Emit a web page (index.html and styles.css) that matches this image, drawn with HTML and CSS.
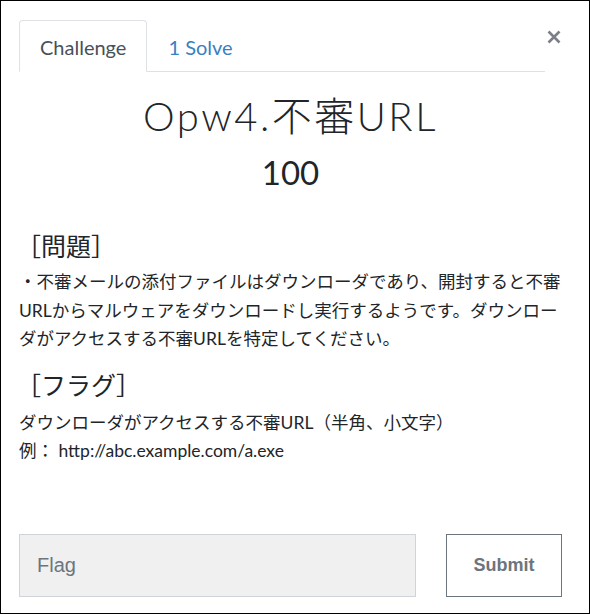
FILE: index.html
```html
<!DOCTYPE html>
<html lang="ja">
<head>
<meta charset="utf-8">
<link rel="stylesheet" href="styles.css">
</head>
<body>
<div class="frame">
  <div class="modal">
    <button class="close" aria-label="Close">
      <svg width="14" height="14" viewBox="0 0 14 14"><path d="M1.5 1.5L12.5 12.5M12.5 1.5L1.5 12.5" stroke="#7b8088" stroke-width="2.6" stroke-linecap="butt"/></svg>
    </button>
    <ul class="tabs">
      <li class="tab active">Challenge</li>
      <li class="tab link">1 Solve</li>
    </ul>
    <div class="content">
      <h1 class="title">Opw4.不審URL</h1>
      <h3 class="value">100</h3>
      <div class="desc">
        <h4 class="sec">［問題］</h4>
        <p class="text">・不審メールの添付ファイルはダウンローダであり、開封すると不審URLからマルウェアをダウンロードし実行するようです。ダウンローダがアクセスする不審URLを特定してください。</p>
        <h4 class="sec sec2">［フラグ］</h4>
        <p class="text">ダウンローダがアクセスする不審URL（半角、小文字）<br>例： http://abc.example.com/a.exe</p>
      </div>
    </div>
    <div class="spacer"></div>
    <form class="submit-row">
      <input class="flag" type="text" placeholder="Flag">
      <button class="btn" type="button">Submit</button>
    </form>
  </div>
</div>
</body>
</html>
```

FILE: styles.css
```css
html, body {
  margin: 0;
  padding: 0;
  background: #fff;
}
.frame {
  box-sizing: border-box;
  width: 590px;
  height: 614px;
  border: 1px solid #000;
}
.modal {
  position: relative;
  box-sizing: border-box;
  height: 100%;
  display: flex;
  flex-direction: column;
  padding: 19px 27px 16px 18px;
  font-family: Lato, "Noto Sans CJK JP", sans-serif;
  color: #212529;
}
.close {
  position: absolute;
  top: 29px;
  right: 28px;
  width: 14px;
  height: 14px;
  padding: 0;
  border: 0;
  background: none;
  display: flex;
}
.tabs {
  list-style: none;
  margin: 0 17px 0 0;
  padding: 0;
  display: flex;
  border-bottom: 1px solid #dee2e6;
}
.tab {
  box-sizing: border-box;
  height: 52px;
  padding: 14px 20px 0 20px;
  font-size: 20px;
  line-height: 24px;
  margin-bottom: -1px;
  border: 1px solid transparent;
  border-top-left-radius: 4px;
  border-top-right-radius: 4px;
}
.tab.active {
  color: #495057;
  border-color: #dee2e6 #dee2e6 #fff;
  background: #fff;
}
.tab.link {
  color: #3a7fc1;
}
.content {
  text-align: center;
}
.title {
  margin: 20px 0 0 0;
  font-family: Lato, "Noto Sans CJK JP", sans-serif;
  font-weight: 300;
  font-size: 40px;
  line-height: 48px;
  letter-spacing: 2.5px;
  color: #212529;
}
.value {
  margin: 12px 0 0 0;
  font-weight: 400;
  font-size: 33px;
  line-height: 40px;
  color: #212529;
}
.desc {
  text-align: left;
  margin-top: 38px;
}
.sec {
  margin: 0 0 6px -3px;
  font-weight: 400;
  font-size: 25px;
  line-height: 32px;
  color: #212529;
}
.sec2 {
  margin-bottom: 8px;
}
.text {
  margin: 0 0 15px 0;
  font-size: 17.5px;
  line-height: 28.5px;
  color: #212529;
}
.spacer {
  flex: 1;
}
.submit-row {
  margin: 0;
  display: flex;
  gap: 30px;
  align-items: stretch;
}
.flag {
  box-sizing: border-box;
  width: 398px;
  height: 63px;
  padding: 0 17px;
  background: #f0f0f0;
  border: 1px solid #ced4da;
  font-family: "Liberation Sans", Arial, sans-serif;
  font-size: 20px;
  color: #495057;
}
.flag::placeholder {
  color: #6c757d;
}
.btn {
  box-sizing: border-box;
  width: 116px;
  height: 63px;
  background: #fff;
  border: 1px solid #6c757d;
  font-family: "Liberation Sans", Arial, sans-serif;
  font-weight: 700;
  font-size: 18px;
  color: #6c757d;
}
```
